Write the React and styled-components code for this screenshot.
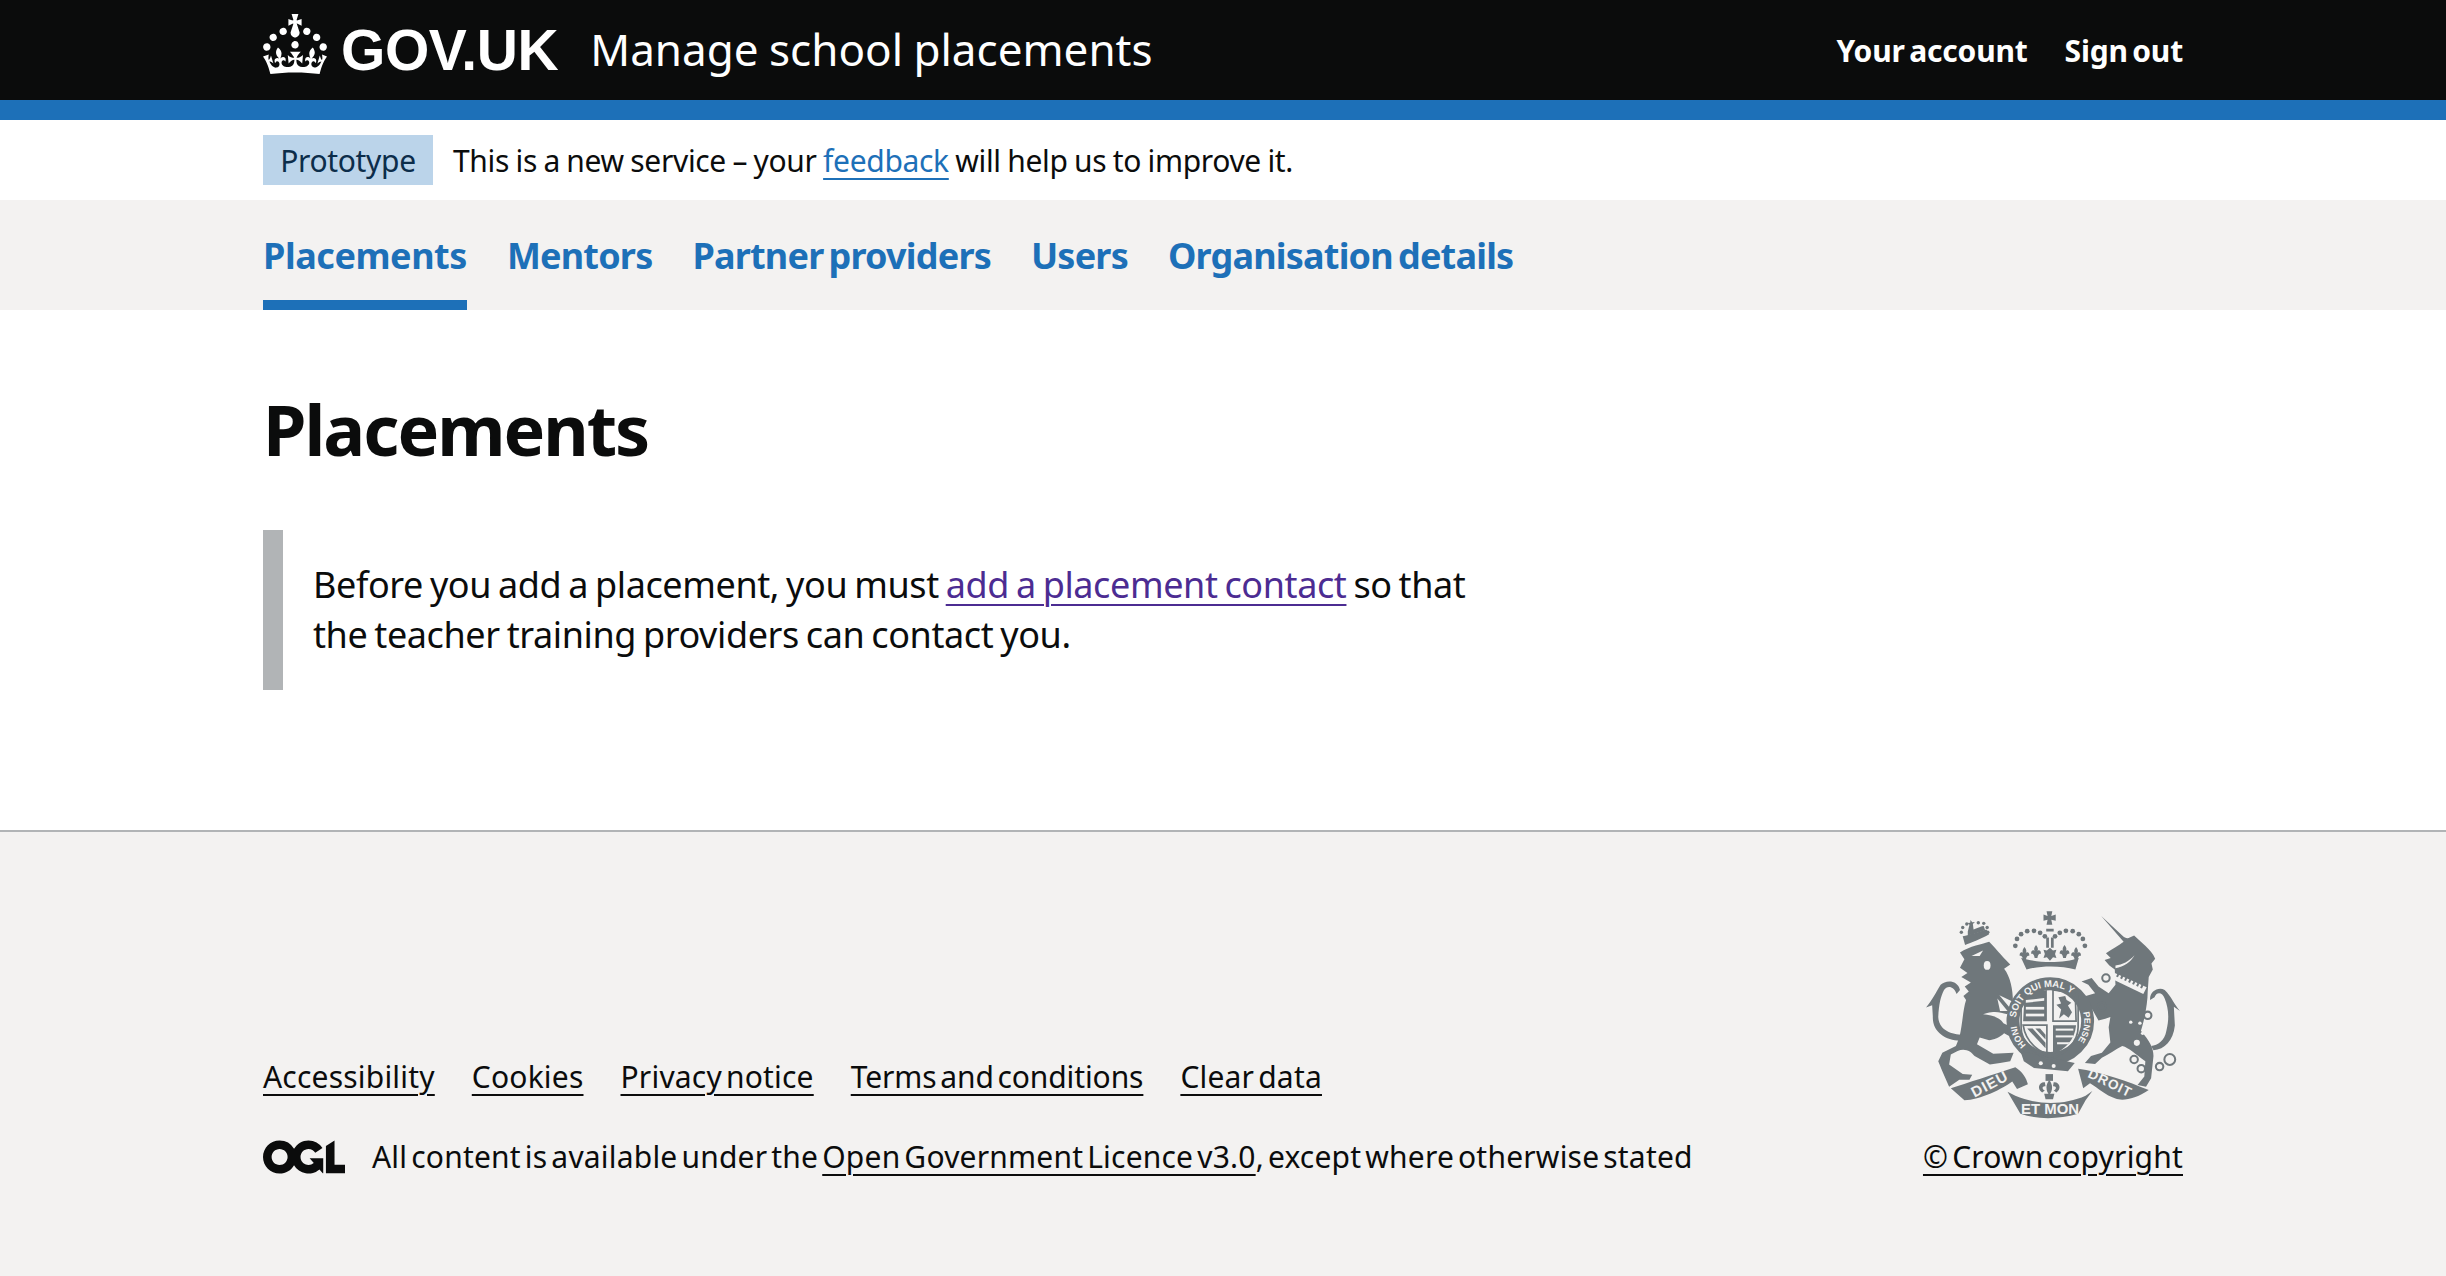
import styled, { createGlobalStyle } from "styled-components";

const FONT = `"Noto Sans", "Liberation Sans", Arial, sans-serif`;
const ARMS = "#6f777b";
const FOOTER_BG = "#f3f2f1";

const GlobalStyle = createGlobalStyle`
  html, body {
    margin: 0;
    padding: 0;
    background: #fff;
    font-family: ${FONT};
    color: #0b0c0c;
  }
`;

const Page = styled.div`
  min-height: 1276px;
  display: flex;
  flex-direction: column;
`;

const Container = styled.div`
  width: 1920px;
  margin: 0 auto;
`;

const HeaderBar = styled.header`
  background: #0b0c0c;
  border-bottom: 20px solid #1d70b8;
  color: #fff;
`;

const HeaderInner = styled(Container)`
  height: 100px;
  display: flex;
  align-items: center;
  justify-content: space-between;
`;

const Brand = styled.div`
  display: flex;
  align-items: center;
`;

const Crown = styled.svg`
  width: 64px;
  height: 60px;
  display: block;
  fill: #fff;
  margin-bottom: 12px;
`;

const Logotype = styled.span`
  font-family: "Liberation Sans", Arial, sans-serif;
  font-weight: 700;
  font-size: 57px;
  letter-spacing: -0.4px;
  margin-left: 14px;
`;

const ServiceName = styled.span`
  font-size: 44px;
  margin-left: 32px;
  margin-top: -2px;
  word-spacing: -1px;
`;

const HeaderLinks = styled.nav`
  display: flex;
  gap: 37px;
  font-size: 30px;
  font-weight: 700;
  letter-spacing: -0.2px;
  word-spacing: -3px;
`;

const PhaseBanner = styled(Container)`
  height: 80px;
  display: flex;
  align-items: center;
  font-size: 30px;
  letter-spacing: -0.33px;
  word-spacing: -1px;
`;

const Tag = styled.strong`
  background: #bbd4ea;
  color: #0c2d4a;
  font-weight: 400;
  height: 50px;
  width: 170px;
  display: flex;
  align-items: center;
  justify-content: center;
  margin-right: 20px;
`;

const BlueLink = styled.a`
  color: #1d70b8;
  text-decoration: underline;
  text-decoration-thickness: 2px;
  text-underline-offset: 6px;
`;

const NavBar = styled.nav`
  background: ${FOOTER_BG};
  height: 110px;
`;

const NavList = styled(Container)`
  display: flex;
  gap: 40px;
  height: 110px;
`;

const NavItem = styled.a`
  font-size: 36px;
  font-weight: 700;
  letter-spacing: ${(p) => (p.$active ? "-0.45px" : "-0.8px")};
  word-spacing: -3.5px;
  color: #1d70b8;
  padding-top: 12px;
  line-height: 88px;
  border-bottom: 10px solid ${(p) => (p.$active ? "#1d70b8" : "transparent")};
`;

const Main = styled(Container)`
  flex: 1;
  padding-top: 79px;
`;

const Title = styled.h1`
  margin: 0 0 61px;
  font-size: 70px;
  line-height: 80px;
  font-weight: 700;
  letter-spacing: -2px;
`;

const InsetText = styled.div`
  width: 1270px;
  box-sizing: border-box;
  border-left: 20px solid #b1b4b6;
  padding: 30px;
  font-size: 36px;
  line-height: 50px;
  letter-spacing: -0.4px;
  word-spacing: -2px;
`;

const VisitedLink = styled.a`
  color: #4c2c92;
  text-decoration: underline;
  text-decoration-thickness: 2px;
  text-underline-offset: 6px;
`;

const FooterBar = styled.footer`
  background: ${FOOTER_BG};
  border-top: 2px solid #b1b4b6;
  height: 446px;
  box-sizing: border-box;
`;

const FooterInner = styled(Container)`
  height: 100%;
  display: flex;
  justify-content: space-between;
  align-items: flex-end;
  padding-bottom: 99px;
  box-sizing: border-box;
  font-size: 30px;
  letter-spacing: 0.2px;
  word-spacing: -4px;
`;

const FooterLinks = styled.div`
  display: flex;
  gap: 37px;
  margin-bottom: 39px;
`;

const FooterLink = styled.a`
  color: #0b0c0c;
  text-decoration: underline;
  text-decoration-thickness: 2px;
  text-underline-offset: 6px;
  ${(p) => p.$tight && "letter-spacing: -0.1px;"}
`;

const Licence = styled.div`
  display: flex;
  align-items: center;
  gap: 27px;
`;

const Ogl = styled.svg`
  width: 82px;
  height: 34px;
  fill: #0b0c0c;
`;

const Copyright = styled.div`
  display: flex;
  flex-direction: column;
  align-items: center;
  gap: 17px;
`;

const Arms = styled.svg`
  width: 258px;
  height: 210px;
  display: block;
`;

const crownDots = [[345,170],[350,150],[362,136],[380,127],[400,126],[418,132],[432,142],[462,142],[476,132],[494,126],[514,127],[532,136],[544,150],[550,170]];
const lionCrownDots = [[186,130],[190,116],[202,106],[236,102],[252,104],[262,116],[264,130]];
const fleurs = [[372,192],[406,186],[490,186],[524,192]];

const CoatOfArms = () => (
  <Arms viewBox="76 62 760 618" aria-hidden="true">
    <defs>
      <path id="garterTop" d="M347 382 A102 102 0 0 1 540 348" />
      <path id="garterLeft" d="M377 463 A100 100 0 0 1 348 392" />
      <path id="garterRight" d="M544.6 366 A100 100 0 0 1 490 483" />
    </defs>
    <g fill={ARMS}>
      {/* lion */}
      <path d="M182 190 C210 170 250 165 268 158 C285 175 300 195 330 225 L312 238 C330 260 338 300 338 335 L298 316 L328 352 L322 372 C300 365 285 362 262 368 L250 372 C275 375 300 380 310 398 L345 415 L335 440 L312 428 C300 440 280 448 268 448 L240 440 L232 460 L280 488 L340 485 L330 510 L300 515 L270 520 L225 495 C215 480 195 470 175 480 L155 490 L150 520 L190 548 L218 550 L210 565 L180 565 L150 585 L130 540 L118 510 L130 485 L170 465 L180 440 C190 400 190 360 200 330 L192 318 L208 305 L196 290 L214 278 L186 262 L204 250 L182 235 L195 210 Z" />
      {/* lion's crown */}
      <path d="M190 142 C210 138 240 128 260 122 L268 136 C245 150 215 160 197 168 Z" />
      <path d="M205 128 L210 108 L204 103 L212 102 L213 94 L218 101 L226 100 L220 106 L222 122 C235 118 245 112 252 112 L256 124 C235 132 218 136 205 140 Z" />
      {lionCrownDots.map(([cx, cy]) => (
        <circle key={`l${cx}-${cy}`} cx={cx} cy={cy} r="5" />
      ))}
      <path d="M82 352 C100 330 110 310 125 285 C140 270 175 270 182 300 L172 312 C165 290 145 285 135 300 C125 320 120 340 118 380 C120 415 150 430 185 432 L182 450 C140 448 100 425 102 378 L100 345 Z" />
      {/* central crown */}
      <path d="M437 68 L454 68 L451 82 L464 78 L464 96 L451 93 L454 108 L437 108 L440 93 L428 96 L428 78 L440 82 Z" />
      <path d="M362 205 C410 222 490 222 532 205 L522 240 C480 228 420 228 378 240 Z" />
      <path d="M436 146 L444 146 L444 176 L436 176 Z M450 146 L458 146 L458 176 L450 176 Z M436 120 L458 120 L458 128 L436 128 Z" />
      <path d="M447 176 L456 184 L466 182 L462 194 L466 206 L456 204 L447 214 L438 204 L428 206 L432 194 L428 182 L438 184 Z" />
      {fleurs.map(([x, y]) => (
        <path key={`f${x}`} d={`M${x} ${y - 18} C${x + 8} ${y - 8} ${x + 6} ${y - 2} ${x + 2} ${y + 2} C${x + 6} ${y - 6} ${x + 16} ${y - 4} ${x + 14} ${y + 8} C${x + 10} ${y + 6} ${x + 6} ${y + 8} ${x + 4} ${y + 20} L${x - 4} ${y + 20} C${x - 6} ${y + 8} ${x - 10} ${y + 6} ${x - 14} ${y + 8} C${x - 16} ${y - 4} ${x - 6} ${y - 6} ${x - 2} ${y + 2} C${x - 6} ${y - 2} ${x - 8} ${y - 8} ${x} ${y - 18} Z`} />
      ))}
      {crownDots.map(([cx, cy]) => (
        <circle key={`${cx}-${cy}`} cx={cx} cy={cy} r="7" />
      ))}
      {/* unicorn */}
      <path d="M598 82 L660 140 C668 148 676 150 682 146 L695 140 C712 158 745 180 757 208 L746 222 L750 240 L738 262 L735 305 C735 340 725 390 715 420 C740 450 752 470 752 495 L745 560 L730 585 L705 580 L725 555 L728 510 C700 490 680 470 660 465 C640 475 620 490 600 500 L580 518 L550 515 L568 495 L600 485 L625 455 L620 410 L625 380 L610 385 L590 390 L570 355 L550 345 L545 320 L580 310 L560 285 L540 275 L570 265 L590 290 L620 310 L640 285 L638 240 L622 228 L608 212 L626 206 L612 192 C630 180 648 170 664 158 Z" />
      <path d="M830 362 C815 345 805 320 785 300 C765 290 740 305 742 330 L755 322 C760 305 778 305 785 325 C795 350 800 380 790 420 C785 450 765 462 745 465 L752 478 C785 475 810 450 815 405 L812 350 Z" />
      {/* garter and motto ring */}
      <circle cx="448" cy="392" r="110" fill="none" stroke={ARMS} strokeWidth="38" />
      <path d="M360 480 L520 515 L500 540 L400 530 L370 510 Z" />
      {/* shield */}
      <path d="M362 312 C400 292 490 292 530 312 L530 410 C530 455 490 490 446 505 C402 490 362 455 362 410 Z" fill="none" stroke={ARMS} strokeWidth="5" />
      <path d="M372 320 C395 306 425 302 438 300 L438 392 L368 392 Z" />
      <path d="M368 404 L438 404 L438 490 C405 475 375 450 368 404 Z" fill="none" stroke={ARMS} strokeWidth="5" />
      <path d="M456 404 L524 404 C520 450 490 475 456 490 Z" />
      {/* second quarter, a rampant lion on a pale field */}
      <path d="M456 300 C480 302 505 306 522 320 L524 392 L456 392 Z" fill="none" stroke={ARMS} strokeWidth="5" />
      <path d="M472 322 L492 318 L496 330 L510 338 L500 346 L512 366 L502 382 L488 372 L474 384 L480 358 L466 344 L480 340 Z" />
      {/* harp strings */}
      <path d="M380 414 L396 414 L434 456 L434 472 Z M404 414 L418 414 L434 432 L434 446 Z" />
      {/* scrolls */}
      <path d="M155 590 C200 575 280 550 345 528 C365 540 378 560 382 578 L350 592 L336 570 C310 590 240 625 195 625 Z" />
      <path d="M322 600 L345 612 C410 640 490 640 552 612 L572 598 L552 625 L530 665 C470 682 410 682 360 665 Z" />
      <path d="M530 532 C590 540 680 570 738 595 C700 622 660 628 640 620 C610 610 590 590 565 575 L545 590 Z" />
      {/* fleur under the shield */}
      <path d="M434 548 L456 548 L456 568 L434 568 Z" />
      <path d="M445 566 C456 578 456 596 445 610 C434 596 434 578 445 566 Z" />
      <path d="M432 572 C414 570 408 592 424 602 L432 596 C422 592 424 582 434 584 Z M458 572 C476 570 482 592 466 602 L458 596 C468 592 466 582 456 584 Z" />
      <path d="M430 606 L460 606 L456 622 L434 622 Z" />
    </g>
    {/* details knocked out in the page colour */}
    <g fill={FOOTER_BG}>
      <path d="M216 200 L250 184 L240 200 Z" />
      <ellipse cx="262" cy="228" rx="10" ry="13" />
      <path d="M292 325 L322 362 L300 362 Z" />
      <path d="M638 250 L732 292 L722 312 L630 268 Z" />
      <path d="M696 198 C685 218 665 232 640 236 L640 228 C660 226 680 216 696 198 Z" />
      <circle cx="720" cy="428" r="5" />
      <circle cx="703" cy="456" r="9" />
      <circle cx="685" cy="395" r="5" />
      <circle cx="712" cy="398" r="5" />
      <path d="M376 330 L430 324 L430 332 L376 338 Z" />
      <path d="M376 350 L430 350 L430 358 L376 358 Z" />
      <path d="M376 370 L430 370 L430 378 L376 378 Z" />
      <path d="M464 414 L516 414 L516 420 L464 420 Z" />
      <path d="M464 434 L516 434 L516 440 L464 440 Z" />
      <path d="M468 454 L506 454 L500 460 L468 460 Z" />
      <circle cx="420" cy="516" r="6" />
      <circle cx="458" cy="524" r="6" />
    </g>
    <path d="M644 256 L726 294" fill="none" stroke={ARMS} strokeWidth="10" strokeDasharray="6 7" />
    <g fill="none" stroke={ARMS} strokeWidth="6">
      <circle cx="612" cy="265" r="11" />
      <circle cx="600" cy="350" r="12" />
      <circle cx="735" cy="375" r="11" />
      <circle cx="695" cy="505" r="11" />
      <circle cx="716" cy="532" r="11" />
      <circle cx="770" cy="526" r="11" />
      <circle cx="800" cy="505" r="16" />
    </g>
    <g fill={FOOTER_BG} fontFamily="Liberation Sans, Arial, sans-serif" fontWeight="700" fontSize="28" letterSpacing="0" wordSpacing="0">
      <text><textPath href="#garterTop">SOIT QUI MAL Y</textPath></text>
      <text fontSize="26"><textPath href="#garterRight">PENSE</textPath></text>
      <text fontSize="26"><textPath href="#garterLeft">HONI</textPath></text>
      <text transform="rotate(-28 225 618)" x="225" y="618" fontSize="44" letterSpacing="3">DIEU</text>
      <text x="362" y="665" fontSize="44">ET MON</text>
      <text transform="rotate(26 556 556)" x="556" y="556" fontSize="40" letterSpacing="3">DROIT</text>
    </g>
  </Arms>
);

export default function App() {
  return (
    <Page>
      <GlobalStyle />
      <HeaderBar>
        <HeaderInner>
          <Brand>
            <Crown viewBox="0 0 32 30" aria-hidden="true">
              <path d="M22.6 10.4c-1 .4-2-.1-2.4-1-.4-.9.1-2 1-2.4.9-.4 2-.1 2.4.9.4 1-.1 2.1-1 2.5m-5.9 6.7c-.9.4-2-.1-2.4-1-.4-.9.1-2 1-2.4.9-.4 2-.1 2.4 1s-.1 2-1 2.4m10.8-3.7c-1 .4-2-.1-2.4-1-.4-.9.1-2 1-2.4.9-.4 2-.1 2.4 1s0 2-1 2.4m3.3 4.8c-1 .4-2-.1-2.4-1-.4-.9.1-2 1-2.4.9-.4 2-.1 2.4 1 .4.9-.1 2-1 2.4M17 4.7l2.3 1.2V2.5l-2.3.7-.2-.2.9-3h-3.4l.9 3-.2.2c-.1.1-2.3-.7-2.3-.7v3.4L15 4.7c.1.1.1.2.2.2l-1.3 4c-.1.2-.1.4-.1.6 0 1.1.8 2 1.9 2.2h.7c1-.2 1.9-1.1 1.9-2.2 0-.2 0-.4-.1-.6l-1.3-4c-.2-.1 0-.2.1-.2m-7.6 5.7c.9.4 2-.1 2.4-1 .4-.9-.1-2-1-2.4-.9-.4-2 .1-2.4 1s0 2 1 2.4m-5 3c.9.4 2-.1 2.4-1 .4-.9-.1-2-1-2.4-.9-.4-2 .1-2.4 1s.1 2 1 2.4m-3.2 4.8c.9.4 2-.1 2.4-1 .4-1-.1-2-1-2.4-.9-.4-2 .1-2.4 1-.4.9.1 2 1 2.4m14.8 11c4.4 0 8.6.3 12.3.8 1.1-4.5 2.4-7 3.7-8.8l-2.5-.9c.2 1.3.3 1.9 0 2.7-.4-.4-.8-1.1-1.1-2.3l-1.2 4c.7-.5 1.3-.8 2-.9-1.1 2.5-2.6 3.1-3.5 3-1.1-.2-1.7-1.2-1.5-2.1.3-1.2 1.5-1.5 2.1-.1 1.1-2.3-.8-3-2-2.3 1.9-1.9 2.1-3.5.6-5.6-2.1 1.6-2.1 3.2-1.2 5.5-1.2-1.4-3.2-.6-2.5 1.6.9-1.4 2.1-.5 1.9.8-.2 1.1-1.7 2.1-3.5 1.9-2.7-.2-2.9-2.1-2.9-3.6.7-.1 1.9.5 2.9 1.9l.4-4.3c-1.1 1.1-2.1 1.4-3.2 1.4.4-1.2 2.1-3 2.1-3h-5.4s1.7 1.9 2.1 3c-1.1 0-2.1-.2-3.2-1.4l.4 4.3c1-1.4 2.2-2 2.9-1.9-.1 1.5-.2 3.4-2.9 3.6-1.9.2-3.4-.8-3.5-1.9-.2-1.3 1-2.2 1.9-.8.7-2.3-1.2-3-2.5-1.6.9-2.2.9-3.9-1.2-5.5-1.5 2-1.3 3.7.6 5.6-1.2-.7-3.1 0-2 2.3.6-1.4 1.8-1.1 2.1.1.2.9-.3 1.9-1.5 2.1-.9.2-2.4-.5-3.5-3 .6 0 1.2.3 2 .9l-1.2-4c-.3 1.1-.7 1.9-1.1 2.3-.3-.8-.2-1.4 0-2.7l-2.9.9C1.3 23 2.6 25.5 3.7 30c3.7-.5 7.9-.8 12.3-.8" />
            </Crown>
            <Logotype>GOV.UK</Logotype>
            <ServiceName>Manage school placements</ServiceName>
          </Brand>
          <HeaderLinks>
            <span>Your account</span>
            <span>Sign out</span>
          </HeaderLinks>
        </HeaderInner>
      </HeaderBar>

      <PhaseBanner>
        <Tag>Prototype</Tag>
        <span>
          This is a new service – your <BlueLink href="#">feedback</BlueLink> will help us to improve it.
        </span>
      </PhaseBanner>

      <NavBar>
        <NavList>
          <NavItem $active>Placements</NavItem>
          <NavItem>Mentors</NavItem>
          <NavItem>Partner providers</NavItem>
          <NavItem>Users</NavItem>
          <NavItem>Organisation details</NavItem>
        </NavList>
      </NavBar>

      <Main>
        <Title>Placements</Title>
        <InsetText>
          Before you add a placement, you must <VisitedLink href="#">add a placement contact</VisitedLink> so that
          the teacher training providers can contact you.
        </InsetText>
      </Main>

      <FooterBar>
        <FooterInner>
          <div>
            <FooterLinks>
              <FooterLink href="#">Accessibility</FooterLink>
              <FooterLink href="#">Cookies</FooterLink>
              <FooterLink href="#">Privacy notice</FooterLink>
              <FooterLink href="#" $tight>Terms and conditions</FooterLink>
              <FooterLink href="#">Clear data</FooterLink>
            </FooterLinks>
            <Licence>
              <Ogl viewBox="0 0 483.2 195.7" aria-hidden="true">
                <path d="M421.5 142.8V.1l-50.7 32.3v161.1h112.4v-50.7zm-122.3-9.6A47.12 47.12 0 0 1 221 97.8c0-26 21.1-47.1 47.1-47.1 16.7 0 31.4 8.7 39.7 21.8l42.7-27.2A97.63 97.63 0 0 0 268.1 0c-36.5 0-68.3 20.1-85.1 49.7A98 98 0 0 0 97.8 0C43.9 0 0 43.9 0 97.8s43.9 97.8 97.8 97.8c36.5 0 68.3-20.1 85.1-49.7a97.76 97.76 0 0 0 149.6 25.4l19.4 22.2h3v-87.8h-80l24.3 27.5zM97.8 145c-26 0-47.1-21.1-47.1-47.1s21.1-47.1 47.1-47.1 47.2 21 47.2 47S123.8 145 97.8 145" />
              </Ogl>
              <span>
                All content is available under the <FooterLink href="#">Open Government Licence v3.0</FooterLink>, except where otherwise stated
              </span>
            </Licence>
          </div>
          <Copyright>
            <CoatOfArms />
            <FooterLink href="#">© Crown copyright</FooterLink>
          </Copyright>
        </FooterInner>
      </FooterBar>
    </Page>
  );
}
